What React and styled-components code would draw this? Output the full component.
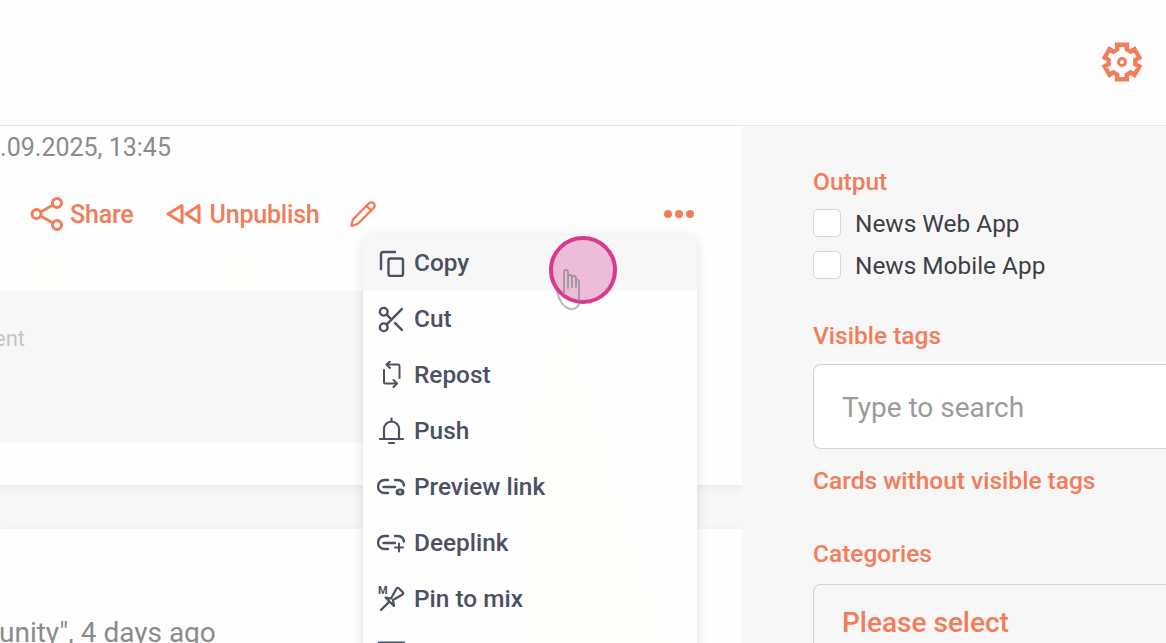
import styled, { createGlobalStyle } from "styled-components";
import { Pencil, Scissors } from "lucide-react";

const GlobalStyle = createGlobalStyle`
  html, body {
    margin: 0;
    height: 100%;
    overflow: hidden;
    background: #f7f7f7;
    font-family: Roboto, "Liberation Sans", sans-serif;
  }
`;

const orange = "#f37c5a";
const slate = "#4c5063";

const Page = styled.div`
  position: relative;
  width: 1166px;
  height: 643px;
  overflow: hidden;
  display: flex;
  flex-direction: column;
`;

const Header = styled.header`
  flex: none;
  height: 83px;
  background: #fefefe;
  border-bottom: 1px solid #e4e4e4;
  display: flex;
  justify-content: flex-end;
  padding: 42px 24px 0 0;
`;

const Body = styled.div`
  flex: 1;
  min-height: 0;
  display: flex;
`;

const Feed = styled.main`
  width: 742px;
  flex: none;
  overflow: hidden;
  display: flex;
  flex-direction: column;
  gap: 44px;
`;

const Card = styled.article`
  background: #fefefe;
  box-shadow: 0 3px 10px rgba(0, 0, 0, 0.06);
  flex: none;
`;

const DateLine = styled.div`
  margin-left: -28px;
  padding-top: 8px;
  font-size: 25px;
  line-height: 28px;
  color: #8b8b8b;
  white-space: nowrap;
`;

const Actions = styled.div`
  display: flex;
  align-items: center;
  padding: 0 48px 0 30px;
  margin-top: 32px;
  height: 40px;
`;

const Action = styled.span`
  display: inline-flex;
  align-items: center;
  gap: ${(p) => p.$gap}px;
  margin-right: ${(p) => p.$right}px;
  font-size: 25px;
  font-weight: 500;
  color: ${orange};
  letter-spacing: -0.2px;
`;

const Dots = styled.span`
  margin-left: auto;
  display: flex;
  gap: 3px;
`;

const Dot = styled.i`
  width: 8px;
  height: 8px;
  border-radius: 50%;
  background: ${orange};
`;

const Quote = styled.div`
  margin-top: 57px;
  width: 500px;
  height: 151px;
  background: #f7f7f7;
  font-size: 22px;
  line-height: 26px;
  color: #c4c4c4;
  padding-top: 35px;
  box-sizing: border-box;
  white-space: nowrap;
`;

const QuoteText = styled.span`
  display: block;
  margin-left: -6px;
`;

const CardFoot = styled.div`
  height: 43px;
`;

const SecondCard = styled(Card)`
  flex: 1;
  padding-top: 88px;
  font-size: 28px;
  line-height: 32px;
  color: #8b8b8b;
  white-space: nowrap;
`;

const Meta = styled.span`
  display: block;
  margin-left: -1px;
`;

const Side = styled.aside`
  flex: 1;
  min-width: 0;
  background: #f7f7f7;
  padding: 42px 0 0 71px;
  overflow: hidden;
`;

const Label = styled.div`
  font-size: 24.5px;
  line-height: 28px;
  font-weight: 500;
  color: ${orange};
  margin-top: ${(p) => p.$top || 0}px;
  white-space: nowrap;
`;

const CheckRow = styled.label`
  display: flex;
  align-items: center;
  gap: 14px;
  height: 28px;
  margin-top: ${(p) => p.$top}px;
  font-size: 24.4px;
  color: #3d3f49;
  white-space: nowrap;
`;

const Box = styled.span`
  width: 26px;
  height: 26px;
  flex: none;
  background: #fff;
  border: 1px solid #d6d6d6;
  border-radius: 5px;
`;

const Field = styled.div`
  margin-top: ${(p) => p.$top}px;
  margin-right: -20px;
  height: 85px;
  box-sizing: border-box;
  border: 1px solid #d2d2d2;
  border-right: 0;
  border-radius: 8px 0 0 8px;
  padding: ${(p) => (p.$select ? "21px" : "2px")} 0 0 28px;
  display: flex;
  align-items: ${(p) => (p.$select ? "flex-start" : "center")};
  background: ${(p) => (p.$select ? "#f7f7f7" : "#fff")};
  color: ${(p) => (p.$select ? orange : "#9b9b9b")};
  font-size: 28px;
  line-height: 34px;
  font-weight: ${(p) => (p.$select ? 500 : 400)};
  white-space: nowrap;
`;

const Menu = styled.div`
  position: absolute;
  z-index: 1;
  left: 363px;
  top: 235px;
  width: 334px;
  height: 460px;
  background: #fefefe;
  border-radius: 12px;
  box-shadow: 0 2px 12px rgba(0, 0, 0, 0.12);
  overflow: hidden;
`;

const MenuRow = styled.div`
  position: relative;
  height: 56px;
  display: flex;
  align-items: center;
  gap: 9px;
  padding-left: 14px;
  background: ${(p) => (p.$active ? "#f7f7f7" : "transparent")};
  font-size: 24.4px;
  font-weight: 500;
  color: ${slate};
`;

const MenuLabel = styled.span`
  margin-top: -2px;
`;

const MenuIcon = styled.span`
  width: 28px;
  height: 28px;
  display: flex;
  align-items: center;
  justify-content: center;
  flex: none;

  svg {
    flex: none;
  }
`;

const Glare = styled.div`
  position: absolute;
  background: #fffdfa;
  left: ${(p) => p.$left}px;
  top: 235px;
  width: 40px;
  height: 56px;
  clip-path: polygon(50% 0, 100% 100%, 0 100%);
`;

const MenuGlare = styled.div`
  position: absolute;
  left: 157px;
  top: 85px;
  width: 146px;
  height: 323px;
  background: #fffdfa;
  clip-path: polygon(28% 0, 55% 37%, 100% 100%, 0 100%, 7% 60%, 0 37%);
`;

const Pointer = styled.div`
  position: absolute;
  z-index: 2;
  left: 549px;
  top: 236px;
  width: 68px;
  height: 68px;
  box-sizing: border-box;
  border-radius: 50%;
  border: 4px solid #d83a8d;
  background: #ecbcd8;
`;

const Hand = styled.svg`
  position: absolute;
  z-index: ${(p) => p.$layer};
  left: 552px;
  top: 266px;
`;

const Gear = () => {
  const pts = [];
  for (let i = 0; i < 6; i++) {
    const a = (Math.PI / 3) * i - Math.PI / 2;
    const at = (r, d) => {
      const t = a + d;
      return `${(20 + r * Math.cos(t)).toFixed(2)} ${(20 + r * Math.sin(t)).toFixed(2)}`;
    };
    pts.push(at(13.5, -0.36), at(18, -0.28), at(18, 0.28), at(13.5, 0.36));
  }
  return (
    <svg width="40" height="40" viewBox="0 0 40 40" fill="none" stroke={orange} strokeWidth="4.400" strokeLinejoin="miter">
      <path d={`M${pts.join("L")}Z`} />
      <circle cx="20" cy="20" r="3.500" strokeWidth="3" />
    </svg>
  );
};

const ShareIcon = () => (
  <svg width="33" height="34" viewBox="0 0 33 34" fill="none" stroke={orange} strokeWidth="3">
    <circle cx="6.500" cy="17" r="4.500" />
    <circle cx="27" cy="6" r="4.500" />
    <circle cx="27" cy="28" r="4.500" />
    <path d="M10.500 15 23 8M10.500 19 23 26" />
  </svg>
);

const UnpublishIcon = () => (
  <svg width="35" height="22" viewBox="0 0 35 22" fill="none" stroke={orange} strokeWidth="3" strokeLinejoin="round">
    <path d="M2 11 16 2.500v17z" />
    <path d="M20 11 33 2.500v17z" />
  </svg>
);

const iconProps = {
  width: 28,
  height: 28,
  viewBox: "0 0 28 28",
  fill: "none",
  stroke: slate,
  strokeWidth: 2.4,
  strokeLinecap: "round",
  strokeLinejoin: "round",
};

const CopyIcon = () => (
  <svg {...iconProps}>
    <path d="M18 3H6a2 2 0 0 0-2 2v15" />
    <rect x="11.500" y="9.500" width="14.500" height="17.500" rx="2" />
  </svg>
);

const RepostIcon = () => (
  <svg {...iconProps} strokeWidth="2">
    <path d="M10 3.500h11a1.500 1.500 0 0 1 1.500 1.500v12" />
    <path d="M13 0.500 9.500 3.500 13 7" />
    <path d="M19.500 22.500H8.500A1.500 1.500 0 0 1 7 21V9" />
    <path d="M16.500 19 20 22.500 16.500 26" />
  </svg>
);

const BellIcon = () => (
  <svg {...iconProps} strokeWidth="2.200">
    <path d="M7 21.500V12a7.500 7.500 0 0 1 15 0v9.500" />
    <path d="M3 22h23" />
    <path d="M14.500 1.500v3" />
    <path d="M12 26h5" />
  </svg>
);

const LinkBase = () => (
  <>
    <path d="M11 7H7.500a6.500 6.500 0 0 0 0 13H11" />
    <path d="M6.500 14H18" />
    <path d="M18 7h3a6.500 6.500 0 0 1 6 5.500" />
  </>
);

const PreviewIcon = () => (
  <svg {...iconProps}>
    <LinkBase />
    <ellipse cx="23" cy="19" rx="4.500" ry="3.500" fill={slate} stroke="none" />
    <circle cx="23" cy="19" r="1.400" fill="#c9cad2" stroke="none" />
  </svg>
);

const DeepIcon = () => (
  <svg {...iconProps}>
    <LinkBase />
    <path d="M22 14.500v8M18 18.500h8" strokeWidth="2" />
  </svg>
);

const PinMixIcon = () => (
  <svg {...iconProps}>
    <text x="1" y="9" fontSize="11" fontWeight="700" fill={slate} stroke="none" fontFamily="Roboto, sans-serif">
      M
    </text>
    <path d="M4 25 12 17" />
    <path d="M8.500 12.500 14 13.500 19.500 3.500a1.500 1.500 0 0 1 2.300-.3l4 4a1.500 1.500 0 0 1-.3 2.300L16 15l1 6z" strokeWidth="2.200" />
  </svg>
);

const CardIcon = () => (
  <svg {...iconProps} strokeWidth="3">
    <path d="M2 2h25v16H2z" />
  </svg>
);

const menuItems = [
  { label: "Copy", icon: <CopyIcon />, active: true },
  { label: "Cut", icon: <Scissors size={31} color={slate} strokeWidth={1.9} /> },
  { label: "Repost", icon: <RepostIcon /> },
  { label: "Push", icon: <BellIcon /> },
  { label: "Preview link", icon: <PreviewIcon /> },
  { label: "Deeplink", icon: <DeepIcon /> },
  { label: "Pin to mix", icon: <PinMixIcon /> },
  { label: "", icon: <CardIcon /> },
];

export default function App() {
  return (
    <Page>
      <GlobalStyle />
      <Header>
        <Gear />
      </Header>
      <Body>
        <Feed>
          <Card>
            <DateLine>23.09.2025, 13:45</DateLine>
            <Actions>
              <Action $gap={7} $right={32}>
                <ShareIcon />
                Share
              </Action>
              <Action $gap={9} $right={29}>
                <UnpublishIcon />
                Unpublish
              </Action>
              <Pencil size={28} color={orange} strokeWidth={2} />
              <Dots>
                <Dot />
                <Dot />
                <Dot />
              </Dots>
            </Actions>
            <Quote>
              <QuoteText>ent</QuoteText>
            </Quote>
            <CardFoot />
          </Card>
          <SecondCard>
            <Meta>unity", 4 days ago</Meta>
          </SecondCard>
        </Feed>
        <Side>
          <Label>Output</Label>
          <CheckRow $top={13}>
            <Box />
            News Web App
          </CheckRow>
          <CheckRow $top={14}>
            <Box />
            News Mobile App
          </CheckRow>
          <Label $top={43}>Visible tags</Label>
          <Field $top={14}>Type to search</Field>
          <Label $top={18}>Cards without visible tags</Label>
          <Label $top={45}>Categories</Label>
          <Field $top={16} $select>
            Please select
          </Field>
        </Side>
      </Body>
      <Glare $left={28} />
      <Glare $left={219} />
      <Menu>
        <MenuGlare />
        {menuItems.map((item, i) => (
          <MenuRow key={i} $active={item.active}>
            <MenuIcon>{item.icon}</MenuIcon>
            <MenuLabel>{item.label}</MenuLabel>
          </MenuRow>
        ))}
      </Menu>
      <Hand $layer={1} width="42" height="48" viewBox="0 0 42 48" fill="none" stroke="#b9b9b9" strokeWidth="2" strokeLinecap="round" strokeLinejoin="round">
        <path d="M5 26c2 8 6 15 13 17 4 1 8-2 10-6" />
      </Hand>
      <Pointer />
      <Hand $layer={3} width="42" height="48" viewBox="0 0 42 48" fill="none" stroke="#a0959d" strokeWidth="1.800" strokeLinecap="round" strokeLinejoin="round">
        <path d="M12 28V6a2 2 0 0 1 4 0v16M16 11a2 2 0 0 1 4 0v10M20 12a2 2 0 0 1 4 0v9M24 14a2 2 0 0 1 3 1v19" />
      </Hand>
    </Page>
  );
}
